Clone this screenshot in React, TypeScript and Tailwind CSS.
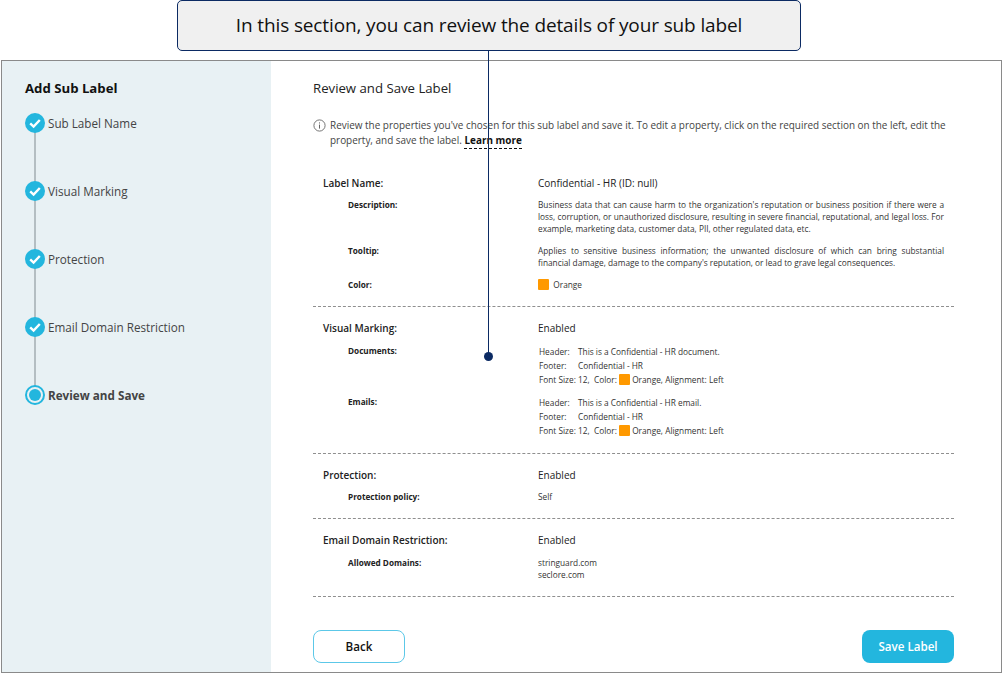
import React from 'react';

const font = { fontFamily: '"Open Sans", sans-serif' };

const steps = ['Sub Label Name', 'Visual Marking', 'Protection', 'Email Domain Restriction'];

const Swatch = () => <span className="inline-block w-[11px] h-[11px] bg-[#ff9900] rounded-[1px] align-[-2px]" />;

const SubRow = ({ label, className, children }: { label: string; className?: string; children: React.ReactNode }) => (
  <div className={`flex ${className || ''}`}>
    <div className="w-[215px] shrink-0 pl-[25px] text-[8.2px] leading-[12px] font-bold text-[#222]">{label}</div>
    <div className="flex-1 text-[8.3px] leading-[12px] text-[#333]">{children}</div>
  </div>
);

const MainRow = ({ label, value }: { label: string; value: string }) => (
  <div className="flex items-center h-[16px] text-[10px] text-[#222]">
    <div className="w-[215px] font-semibold">{label}</div>
    <div>{value}</div>
  </div>
);

const Marking = ({ kind }: { kind: string }) => (
  <div className="ml-px leading-[14px]">
    <div className="flex"><span className="w-[39px]">Header:</span><span>This is a Confidential - HR {kind}.</span></div>
    <div className="flex"><span className="w-[39px]">Footer:</span><span>Confidential - HR</span></div>
    <div>Font Size: 12,&nbsp; Color: <Swatch /> Orange, Alignment: Left</div>
  </div>
);

const App: React.FC = () => {
  return (
    <div className="relative w-[1003px] h-[674px] bg-white overflow-hidden" style={font}>
      {/* callout */}
      <div className="ml-[177px] w-[624px] h-[51px] bg-[#f0f0f0] border border-[#0b2a63] rounded-[5px] flex items-center justify-center text-[19px] text-[#111] tracking-[-0.13px]">
        In this section, you can review the details of your sub label
      </div>
      <div className="absolute left-[488px] top-[51px] w-px h-[305px] bg-[#0b2a63]" />
      <div className="absolute left-[484px] top-[352px] w-[9px] h-[9px] rounded-full bg-[#0b2a63]" />

      <div className="mt-[9px] ml-px w-[1001px] h-[613px] border border-[#8a8a8a] flex">
        {/* sidebar */}
        <div className="w-[269px] h-full bg-[#e8f1f4] pl-[23px] pt-[18px]">
          <div className="text-[13.2px] leading-[18px] font-bold text-[#111]">Add Sub Label</div>
          <div className="mt-[16px]">
            {steps.map((s) => (
              <div key={s} className="h-[68px] flex relative">
                <div className="absolute left-[9px] top-[10px] w-[2px] h-[68px] bg-[#b4bec2]" />
                <svg className="relative shrink-0" width="20" height="20" viewBox="0 0 20 20">
                  <circle cx="10" cy="10" r="10" fill="#23b6de" />
                  <path d="M5.2 10.4 L8.6 13.6 L14.8 7" fill="none" stroke="#fff" strokeWidth="2.4" />
                </svg>
                <span className="ml-[3px] text-[11.7px] leading-[20px] text-[#444]">{s}</span>
              </div>
            ))}
            <div className="flex relative">
              <div className="w-[20px] h-[20px] rounded-full border-2 border-[#23b6de] flex items-center justify-center relative bg-[#e8f1f4]">
                <div className="w-[12px] h-[12px] rounded-full bg-[#23b6de]" />
              </div>
              <span className="ml-[3px] text-[11.7px] leading-[20px] font-bold text-[#444]">Review and Save</span>
            </div>
          </div>
        </div>

        {/* main */}
        <div className="flex-1 pl-[42px] pr-[47px] pt-[18px]">
          <div className="text-[13.2px] leading-[18px] text-[#222]">Review and Save Label</div>

          <div className="mt-[21px] flex text-[9.95px] leading-[15px] text-[#444]">
            <svg className="shrink-0 mt-px mr-[4px]" width="13" height="13" viewBox="0 0 13 13" fill="none" stroke="#666">
              <circle cx="6.5" cy="6.5" r="5.6" strokeWidth="0.9" />
              <path d="M6.5 5.6V9.6M6.5 3.4V4.5" strokeWidth="1" />
            </svg>
            <div>
              Review the properties you've chosen for this sub label and save it. To edit a property, click on the required section on the left, edit the property, and save the label.{' '}
              <span className="font-bold text-[#111] border-b border-dashed border-[#111] pb-px">Learn more</span>
            </div>
          </div>

          <div className="mt-[27px] px-[10px] h-[131px]">
            <MainRow label="Label Name:" value="Confidential - HR (ID: null)" />
            <SubRow label="Description:" className="mt-[8px]">
              <p className="text-justify">Business data that can cause harm to the organization's reputation or business position if there were a loss, corruption, or unauthorized disclosure, resulting in severe financial, reputational, and legal loss. For example, marketing data, customer data, PII, other regulated data, etc.</p>
            </SubRow>
            <SubRow label="Tooltip:" className="mt-[10px]">
              <p className="text-justify">Applies to sensitive business information; the unwanted disclosure of which can bring substantial financial damage, damage to the company's reputation, or lead to grave legal consequences.</p>
            </SubRow>
            <SubRow label="Color:" className="mt-[10px]">
              <Swatch /> &nbsp;Orange
            </SubRow>
          </div>

          <div className="border-t border-dashed border-[#8f8f8f] px-[10px] h-[147px] pt-[13px]">
            <MainRow label="Visual Marking:" value="Enabled" />
            <SubRow label="Documents:" className="mt-[9px]">
              <Marking kind="document" />
            </SubRow>
            <SubRow label="Emails:" className="mt-[9px]">
              <Marking kind="email" />
            </SubRow>
          </div>

          <div className="border-t border-dashed border-[#8f8f8f] px-[10px] h-[65px] pt-[13px]">
            <MainRow label="Protection:" value="Enabled" />
            <SubRow label="Protection policy:" className="mt-[8px]">Self</SubRow>
          </div>

          <div className="border-t border-dashed border-[#8f8f8f] px-[10px] h-[78px] pt-[13px]">
            <MainRow label="Email Domain Restriction:" value="Enabled" />
            <SubRow label="Allowed Domains:" className="mt-[9px]">
              <div>stringuard.com</div>
              <div>seclore.com</div>
            </SubRow>
          </div>

          <div className="border-t border-dashed border-[#8f8f8f] pt-[33px] flex justify-between">
            <button className="w-[92px] h-[33px] rounded-[8px] border border-[#5cc8e8] bg-white text-[11.6px] font-semibold text-[#111]">Back</button>
            <button className="w-[92px] h-[33px] rounded-[8px] bg-[#23b6de] text-[11.6px] font-semibold text-white">Save Label</button>
          </div>
        </div>
      </div>
    </div>
  );
};

export default App;
